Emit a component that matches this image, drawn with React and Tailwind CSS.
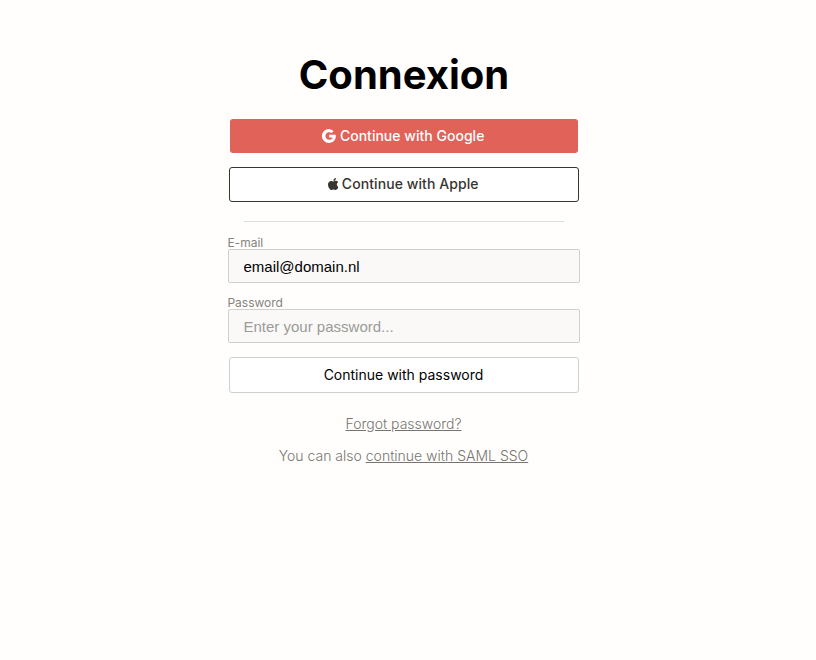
function GoogleIcon() {
  return (
    <svg viewBox="0 0 14 14" className="size-3.5 shrink-0 fill-current" aria-hidden="true">
      <path d="M7.2 5.7v2.7h3.5c-.4 1.6-1.7 2.4-3.5 2.4A3.8 3.8 0 1 1 9.7 4.1l2-2A6.9 6.9 0 1 0 7.2 13.9c3.8 0 6.6-2.7 6.6-6.6 0-.5 0-1.100-.1-1.600Z" />
    </svg>
  );
}

function AppleIcon() {
  return (
    <svg viewBox="4 32 374 448" className="h-3 w-[10.5px] shrink-0 fill-current" preserveAspectRatio="none" aria-hidden="true">
      <path d="M318.7 268.7c-.2-36.7 16.4-64.4 50-84.8-18.8-26.9-47.2-41.7-84.7-44.6-35.5-2.8-74.3 20.7-88.5 20.7-15 0-49.4-19.7-76.4-19.7C63.3 141.2 4 184.8 4 273.5q0 39.3 14.4 81.2c12.8 36.7 59 126.7 107.2 125.2 25.2-.6 43-17.9 75.8-17.9 31.8 0 48.3 17.9 76.4 17.9 48.6-.7 90.4-82.5 102.6-119.3-65.2-30.7-61.7-90-61.7-91.9zm-56.6-164.2c27.3-32.4 24.8-61.9 24-72.5-24.1 1.4-52 16.4-67.9 34.9-17.5 19.8-27.8 44.3-25.6 71.9 26.1 2 49.9-11.4 69.500-34.300z" />
    </svg>
  );
}

function Field({ label, children }) {
  return (
    <label className="mb-3.5 block">
      <span className="-ml-[0.6px] block h-3 text-xs leading-3 text-[#85837f]">{label}</span>
      {children}
    </label>
  );
}

const inputClass =
  "block h-[34px] w-full rounded-[2px] border border-[#d0d0cf] bg-[#faf9f8] px-[14.5px] font-['Liberation_Sans',Arial,sans-serif] text-[15px] text-black outline-none placeholder:text-[#9b9b99]";

export default function App() {
  return (
    <div className="min-h-[660px] bg-[#fffefc] pt-[45px] font-['Inter',sans-serif]">
      <main className="ml-[228px] w-[352px]">
        <h1 className="text-center text-[40px] leading-[60px] font-bold text-black">Connexion</h1>
        <button className="mx-auto mt-3.5 flex h-[34px] w-[348px] items-center justify-center gap-[3.8px] rounded-[3px] bg-[#e16259] pr-[1.5px] text-sm font-medium tracking-[0.02px] text-white">
          <GoogleIcon />
          Continue with Google
        </button>
        <button className="mx-auto mt-3.5 flex h-[35px] w-[350px] items-center justify-center gap-[3.5px] rounded-[3px] border border-[#37352f] bg-white pr-[1.5px] pb-px text-sm font-medium tracking-[0.08px] text-[#37352f]">
          <AppleIcon />
          Continue with Apple
        </button>
        <hr className="mx-4 mt-[19px] mb-[15px] border-[#dededd]" />
        <Field label="E-mail">
          <input type="email" defaultValue="email@domain.nl" className={inputClass} />
        </Field>
        <Field label="Password">
          <input type="password" placeholder="Enter your password..." className={inputClass} />
        </Field>
        <button className="mx-auto flex h-9 w-[350px] items-center justify-center rounded-[3px] border border-[#d0d0cf] bg-white pr-px text-sm text-black">
          Continue with password
        </button>
        <p className="mt-[21px] pr-px text-center text-sm leading-5 font-light text-[#777572]">
          <a href="#forgot" className="underline">Forgot password?</a>
        </p>
        <p className="mt-3 pr-px text-center text-sm leading-5 font-light text-[#777572]">
          You can also <a href="#saml" className="underline">continue with SAML SSO</a>
        </p>
      </main>
    </div>
  );
}
